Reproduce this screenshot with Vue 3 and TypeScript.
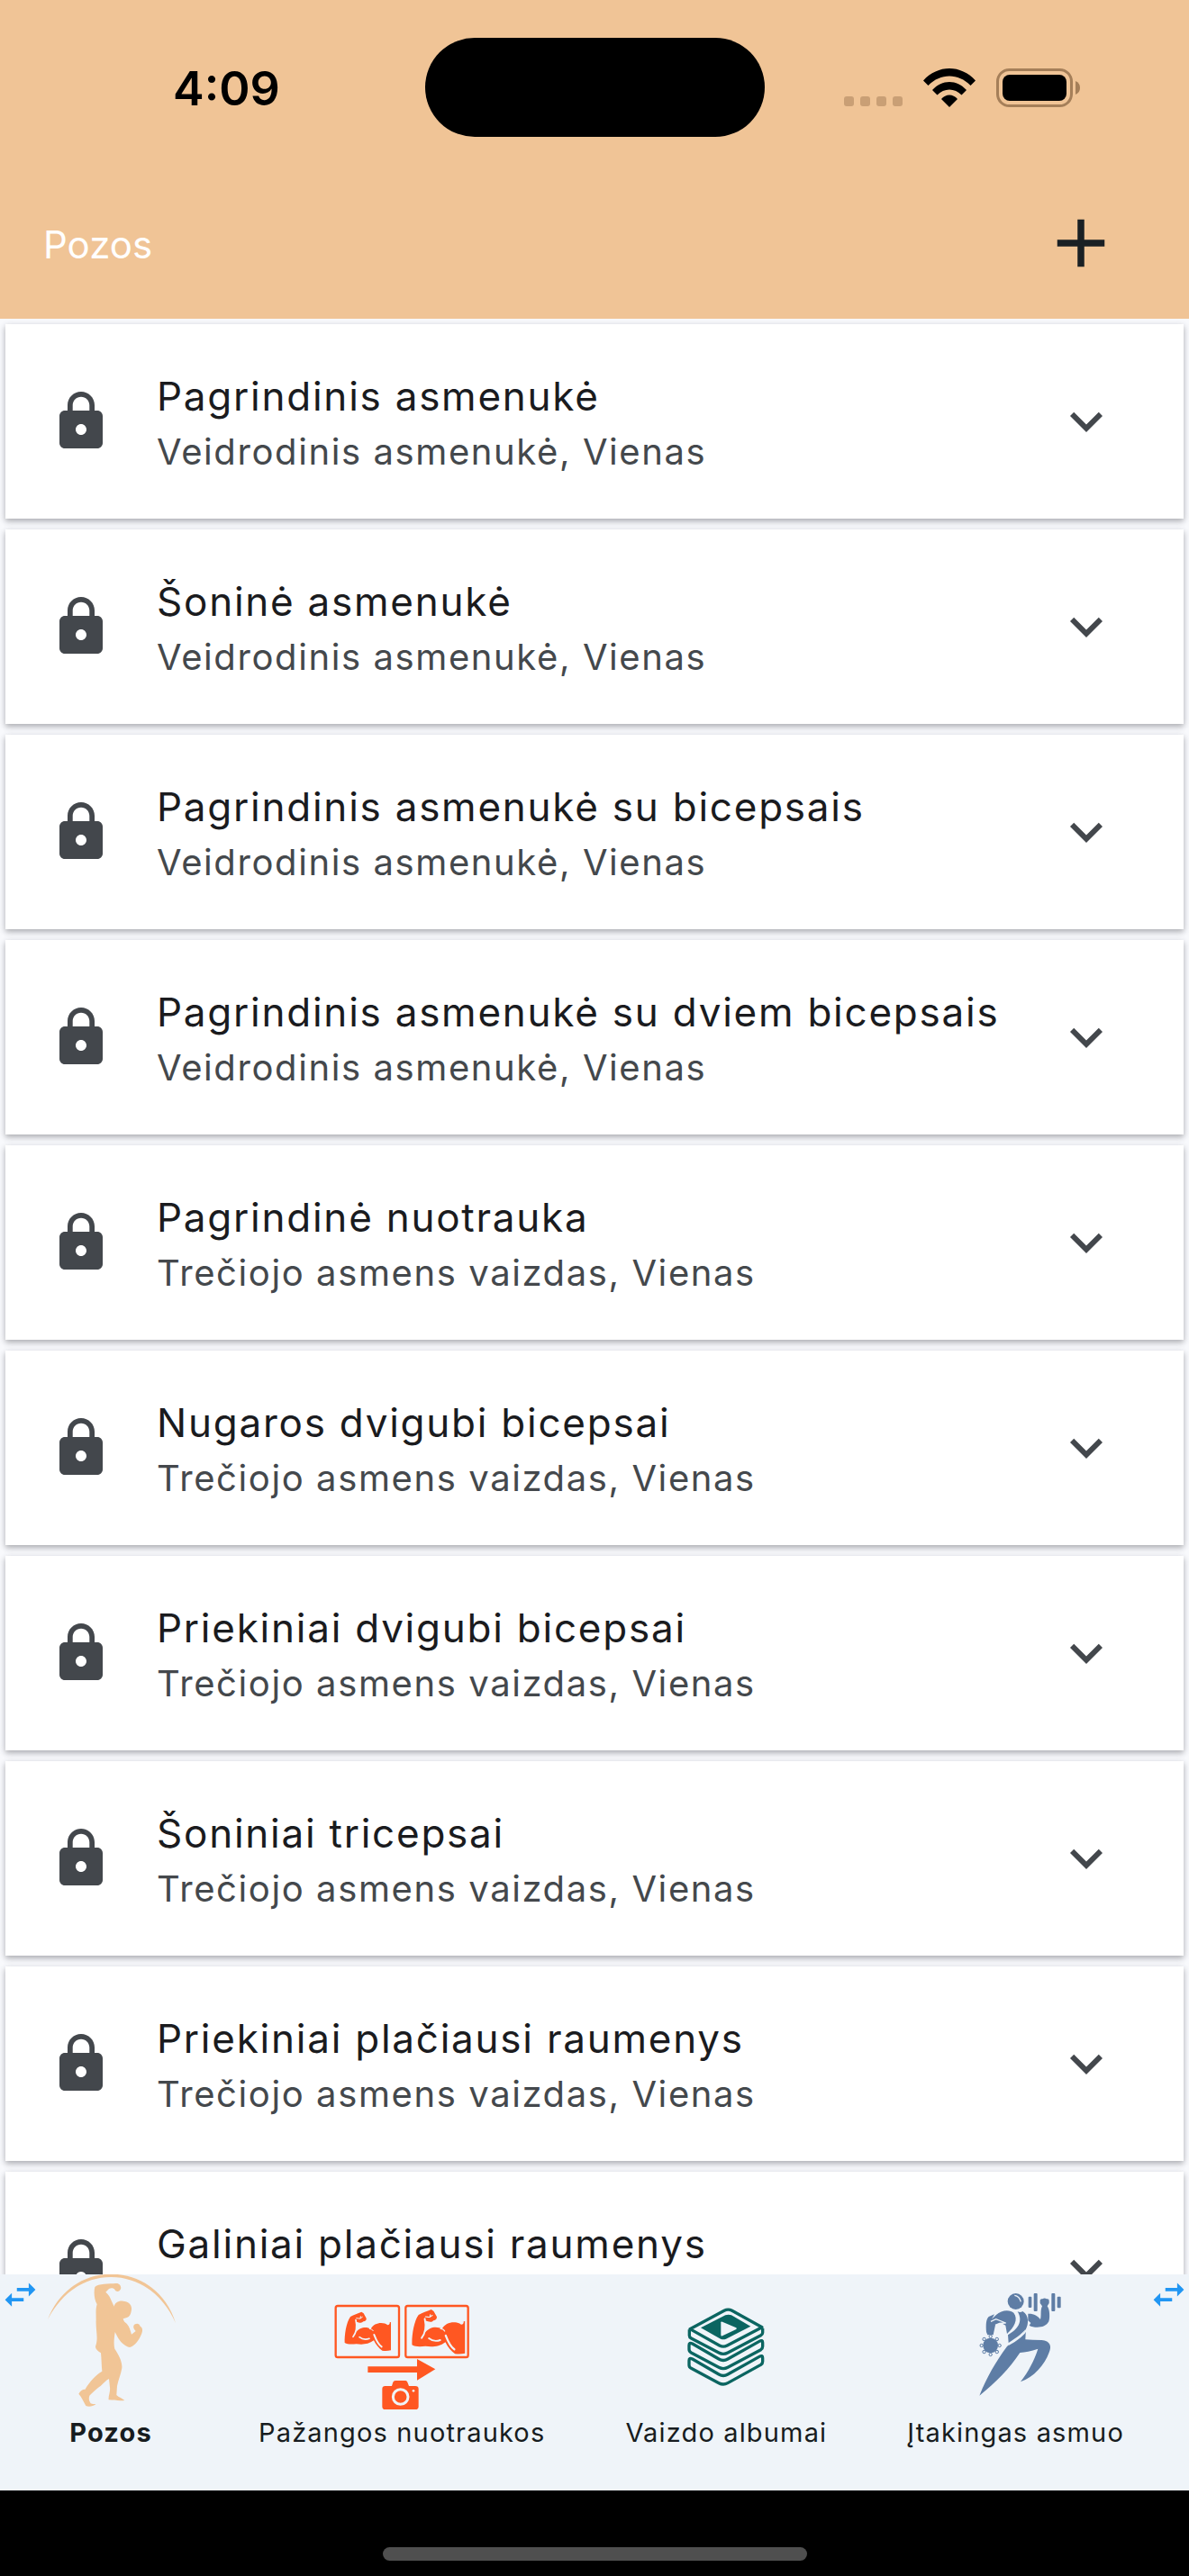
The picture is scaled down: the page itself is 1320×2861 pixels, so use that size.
<script setup lang="ts">
import { ref } from 'vue'

interface Pose {
  title: string
  detail: string
}

const mirror = 'Veidrodinis asmenukė, Vienas'
const thirdPerson = 'Trečiojo asmens vaizdas, Vienas'

const poses: Pose[] = [
  { title: 'Pagrindinis asmenukė', detail: mirror },
  { title: 'Šoninė asmenukė', detail: mirror },
  { title: 'Pagrindinis asmenukė su bicepsais', detail: mirror },
  { title: 'Pagrindinis asmenukė su dviem bicepsais', detail: mirror },
  { title: 'Pagrindinė nuotrauka', detail: thirdPerson },
  { title: 'Nugaros dvigubi bicepsai', detail: thirdPerson },
  { title: 'Priekiniai dvigubi bicepsai', detail: thirdPerson },
  { title: 'Šoniniai tricepsai', detail: thirdPerson },
  { title: 'Priekiniai plačiausi raumenys', detail: thirdPerson },
  { title: 'Galiniai plačiausi raumenys', detail: thirdPerson },
]

const tabs = ['Pozos', 'Pažangos nuotraukos', 'Vaizdo albumai', 'Įtakingas asmuo']
const active = ref(0)
const armTransforms = ['', 'translate(214 -20) scale(1.145)']
const gearAngles = [0, 45, 90, 135, 180, 225, 270, 315]
</script>

<template>
  <div class="screen">
    <header class="top">
      <div class="status">
        <span class="time">4:09</span>
        <div class="island"></div>
        <div class="indicators">
          <svg class="dots" viewBox="0 0 65 43" aria-hidden="true">
            <rect v-for="n in 4" :key="n" :x="(n - 1) * 18" y="31" width="11" height="11" rx="3" />
          </svg>
          <svg class="wifi" viewBox="0 0 58 43" aria-hidden="true">
            <path d="M0 13.500C16-4.500 42-4.500 58 13.500L52.500 19C39 5 19 5 5.500 19Z" />
            <path d="M10 24C21 12 37 12 48 24L42.500 29.500C35 21.500 23 21.500 15.500 29.500Z" />
            <path d="M20 34C25 28 33 28 38 34L29 43Z" />
          </svg>
          <svg class="battery" viewBox="0 0 94 43" aria-hidden="true">
            <rect x="1.500" y="1.500" width="82" height="40" rx="13" class="shell" />
            <rect x="7" y="7" width="71" height="29" rx="8" />
            <path d="M88 14Q93 16 93 21.500T88 29Z" class="nub" />
          </svg>
        </div>
      </div>
      <div class="appbar">
        <h1>Pozos</h1>
        <button class="add" type="button" aria-label="Pridėti">
          <svg viewBox="0 0 24 24"><path d="M19 13h-6v6h-2v-6H5v-2h6V5h2v6h6v2z" /></svg>
        </button>
      </div>
    </header>

    <main class="list">
      <button v-for="pose in poses" :key="pose.title" class="card" type="button">
        <svg class="icon" viewBox="0 0 24 24" aria-hidden="true">
          <path d="M18 8h-1V6c0-2.760-2.240-5-5-5S7 3.240 7 6v2H6c-1.100 0-2 .9-2 2v10c0 1.100.9 2 2 2h12c1.100 0 2-.9 2-2V10c0-1.100-.9-2-2-2zm-6 9c-1.100 0-2-.9-2-2s.9-2 2-2 2 .9 2 2-.9 2-2 2zm3.100-9H8.900V6c0-1.710 1.390-3.100 3.100-3.100 1.710 0 3.100 1.390 3.100 3.100v2z" />
        </svg>
        <span class="text">
          <span class="title">{{ pose.title }}</span>
          <span class="detail">{{ pose.detail }}</span>
        </span>
        <svg class="icon" viewBox="0 0 24 24" aria-hidden="true">
          <path d="M16.590 8.590L12 13.170 7.410 8.590 6 10l6 6 6-6z" />
        </svg>
      </button>
    </main>

    <nav class="tabs">
      <svg class="swap left" viewBox="0 0 24 24" aria-hidden="true">
        <path d="M6.990 11L3 15l3.990 4v-3H14v-2H6.990v-3zM21 9l-3.990-4v3H10v2h7.010v3L21 9z" />
      </svg>
      <button
        v-for="(tab, i) in tabs"
        :key="tab"
        class="tab"
        :class="{ active: i === active }"
        type="button"
        @click="active = i"
      >
        <svg v-if="i === 0" class="pic" viewBox="24 48 450 450" fill="#f1c596" aria-hidden="true">
          <path d="M39 198C75 105 155 47 250 47C345 47 433 105 465 210C425 118 345 57 250 57C160 57 85 110 39 198Z" />
          <path d="M265 78C278 76 285 88 282 97C278 107 266 107 262 98C258 93 250 92 243 96L232 107C242 115 247 125 252 138L260 155C262 143 275 135 290 137C308 138 320 150 318 165C316 180 312 190 300 193L290 196C292 204 295 208 302 212C312 222 314 235 318 248L332 237C323 229 322 218 330 214C338 210 345 214 347 221C357 227 355 238 350 250C342 268 330 287 312 291C296 288 280 275 268 250L263 240C260 262 258 280 262 296C275 315 288 340 286 360C283 380 274 400 270 420L268 450C275 458 288 461 295 468C280 470 262 468 242 466C240 455 248 440 246 425L243 396C232 402 226 410 215 420C200 430 185 445 178 452C174 464 178 472 182 478C190 482 196 478 199 481C190 488 175 490 166 486C158 470 150 455 142 446C148 436 158 430 163 432C178 405 200 382 220 371C218 350 218 330 216 310C204 302 195 294 199 285C208 260 198 230 200 200C200 180 198 165 203 148C193 130 192 105 196 90C206 78 245 80 265 78Z" />
        </svg>
        <svg v-else-if="i === 1" class="pic" viewBox="36 -42 450 450" fill="#ff5722" aria-hidden="true">
          <g fill="none" stroke="#ff5722" stroke-width="7">
            <rect x="41" y="63" width="211" height="171" rx="7" />
            <rect x="274" y="63" width="208" height="171" rx="7" />
          </g>
          <g v-for="t in armTransforms" :key="t" :transform="t">
            <path d="M71 186C70 160 76 118 90 99C102 91 114 89 127 83L134 88L143 104C144 112 138 114 133 115C128 122 118 118 110 116C113 130 110 140 108 152C122 132 145 132 158 140C168 118 200 115 214 127Q222 126 221 118L225 117V211Q210 214 196 212C185 205 175 192 168 178C150 192 130 192 110 190C95 191 80 192 71 186Z" />
            <g fill="none" stroke="#eff4f9" stroke-width="5" stroke-linecap="round">
              <path d="M108 110C113 133 108 154 99 166" />
              <path d="M120 167C130 175 142 176 153 172" />
              <path d="M169 159C174 172 181 191 194 199" stroke-width="6" />
              <path d="M154 139Q162 139 166 146" stroke-width="3" />
              <path d="M110 104C116 104 120 106 123 105L124 98M123 105L130 100" stroke-width="3" />
            </g>
          </g>
          <path d="M148 265H312V240L373 274L312 311V285H148Z" />
          <path d="M206 330H228L232 317Q234 312 240 312H274Q278 312 280 317L285 330H306Q317 330 317 340V398Q317 408 306 408H206Q196 408 196 398V340Q196 330 206 330Z" />
          <circle cx="257" cy="366" r="25" fill="none" stroke="#eff4f9" stroke-width="9" />
          <circle cx="300" cy="346" r="4" fill="#eff4f9" />
        </svg>
        <svg v-else-if="i === 2" class="pic" viewBox="-51 -42 450 450" fill="#0b6561" aria-hidden="true">
          <g fill="none" stroke="#0b6561" stroke-width="10" stroke-linejoin="round">
            <path d="M54 140L168 79Q181 72 194 79L294 134L178 195Q165 202 152 195Z" />
            <path d="M52 142V162Q52 168 58 171L150 219Q165 227 180 219L290 161Q296 158 296 152V138" />
            <path d="M51 194Q51 184 62 189L150 240Q165 249 180 240L285 181Q296 175 296 185V198Q296 205 290 209L180 268Q165 276 150 268L58 219Q51 215 51 208Z" />
            <path d="M51 245Q51 235 62 240L150 291Q165 300 180 291L285 232Q296 226 296 236V248Q296 255 290 259L180 320Q165 328 150 320L58 271Q51 267 51 260Z" />
          </g>
          <path d="M90 136L172 94Q182 90 192 94L256 131L174 173Q165 177 156 173Z" />
          <path d="M157 118Q157 114 162 116L208 136Q211 138 208 141L162 163Q157 165 157 160Z" fill="#eff4f9" />
        </svg>
        <svg v-else class="pic" viewBox="-48 -12 450 450" fill="#5e7da5" aria-hidden="true">
          <circle cx="176" cy="78" r="27" />
          <path d="M172 58Q188 60 193 79" fill="none" stroke="#eff4f9" stroke-width="4" />
          <rect x="218" y="62" width="11" height="37" rx="3" />
          <rect x="236" y="51" width="12" height="60" rx="3" />
          <rect x="295" y="51" width="12" height="60" rx="3" />
          <rect x="314" y="62" width="12" height="38" rx="3" />
          <path d="M257 74Q258 68 265 70Q272 65 279 70Q287 68 287 76V84L281 94C290 105 290 135 286 145C275 168 238 168 221 158L226 150L217 142V119C235 118 250 126 258 138C262 125 257 108 264 94L257 84Z" />
          <path d="M182 112Q192 117 199 111C222 125 218 155 210 170L208 205Q230 207 262 207C292 210 296 228 287 248C272 290 236 330 192 346C218 312 238 274 250 236Q215 247 190 249C155 302 108 350 55 392C80 330 110 278 147 228C168 209 202 192 209 170C195 188 170 204 152 216L150 190C182 172 202 145 182 112Z" />
          <path d="M213 171C200 194 174 210 152 222" fill="none" stroke="#eff4f9" stroke-width="5" />
          <path d="M78 180C76 155 77 138 86 129L105 121L96 137L110 124C130 104 158 106 169 116C186 138 170 165 147 186L142 158L128 150L108 157L101 190H82Z" />
          <path d="M93 145L110 137L143 150Q122 149 108 157" fill="none" stroke="#eff4f9" stroke-width="4" />
          <circle cx="92" cy="225" r="25" />
          <g fill="#eff4f9" stroke="#5e7da5" stroke-width="3">
            <circle v-for="a in gearAngles" :key="a" cx="92" cy="195" r="5" :transform="`rotate(${a} 92 225)`" />
          </g>
        </svg>
        <span class="label">{{ tab }}</span>
      </button>
      <svg class="swap right" viewBox="0 0 24 24" aria-hidden="true">
        <path d="M6.990 11L3 15l3.990 4v-3H14v-2H6.990v-3zM21 9l-3.990-4v3H10v2h7.010v3L21 9z" />
      </svg>
    </nav>

    <footer class="home"><div class="handle"></div></footer>
  </div>
</template>

<style>
body {
  margin: 0;
}
</style>

<style scoped>
.screen {
  display: flex;
  flex-direction: column;
  height: 100vh;
  background: #f8f9fc;
  font-family: Inter, "Liberation Sans", sans-serif;
  color: #1a1b1e;
}

button {
  border: 0;
  padding: 0;
  background: none;
  font: inherit;
  color: inherit;
}

svg {
  display: block;
  flex: none;
}

.top {
  flex: none;
  background: #f0c496;
}

.status {
  display: grid;
  grid-template-columns: 1fr auto 1fr;
  align-items: center;
  padding: 42px 120px 34px 192px;
  color: #000;
}

.time {
  padding-top: 4px;
  font-size: 52px;
  line-height: 64px;
  font-weight: 600;
}

.island {
  width: 377px;
  height: 110px;
  margin-right: 72px;
  border-radius: 55px;
  background: #000;
}

.indicators {
  display: flex;
  justify-content: flex-end;
  gap: 23px;
}

.dots {
  width: 65px;
  height: 43px;
  fill: #c99f75;
}

.wifi {
  width: 58px;
  height: 43px;
}

.battery {
  width: 94px;
  height: 43px;
}

.shell {
  fill: none;
  stroke: #a57f59;
  stroke-width: 3;
}

.nub {
  fill: #a57f59;
}

.appbar {
  display: flex;
  align-items: center;
  justify-content: space-between;
  height: 168px;
  padding: 0 75px 0 48px;
}

h1 {
  margin: 0;
  padding-top: 4px;
  font-size: 42px;
  line-height: 60px;
  font-weight: 400;
  color: #fff;
}

.add svg {
  width: 90px;
  height: 90px;
  fill: #1a2024;
}

.list {
  flex: 1;
  min-height: 0;
  overflow-y: auto;
  scrollbar-width: none;
  display: flex;
  flex-direction: column;
  gap: 12px;
  padding: 6px;
}

.card {
  flex: none;
  display: flex;
  align-items: center;
  gap: 48px;
  height: 216px;
  padding: 0 72px 0 48px;
  background: #fff;
  text-align: left;
  box-shadow: 0 3px 6px rgba(0, 0, 0, 0.24), 0 2px 8px rgba(60, 60, 90, 0.12);
}

.icon {
  width: 72px;
  height: 72px;
  fill: #43474c;
}

.text {
  flex: 1;
  min-width: 0;
  display: flex;
  flex-direction: column;
  padding-top: 3px;
}

.title {
  font-size: 44px;
  line-height: 64px;
  letter-spacing: 0.04em;
}

.detail {
  font-size: 40px;
  line-height: 60px;
  letter-spacing: 0.04em;
  color: #44484c;
}

.tabs {
  flex: none;
  position: relative;
  display: flex;
  align-items: flex-start;
  justify-content: space-between;
  height: 240px;
  padding: 0 72px 0 48px;
  background: #eff4f9;
}

.swap {
  position: absolute;
  top: 0;
  width: 45px;
  height: 45px;
  fill: #2196f3;
}

.left {
  left: 0;
}

.right {
  right: 0;
}

.tab {
  display: flex;
  flex-direction: column;
  align-items: center;
  gap: 6px;
}

.pic {
  width: 150px;
  height: 150px;
}

.label {
  font-size: 29px;
  line-height: 40px;
  letter-spacing: 0.04em;
  color: #171c20;
  white-space: nowrap;
}

.active .label {
  font-weight: 700;
}

.home {
  flex: none;
  display: flex;
  justify-content: center;
  align-items: flex-end;
  height: 95px;
  background: #000;
}

.handle {
  width: 471px;
  height: 15px;
  margin-bottom: 17px;
  border-radius: 8px;
  background: #4f4f4f;
}
</style>
